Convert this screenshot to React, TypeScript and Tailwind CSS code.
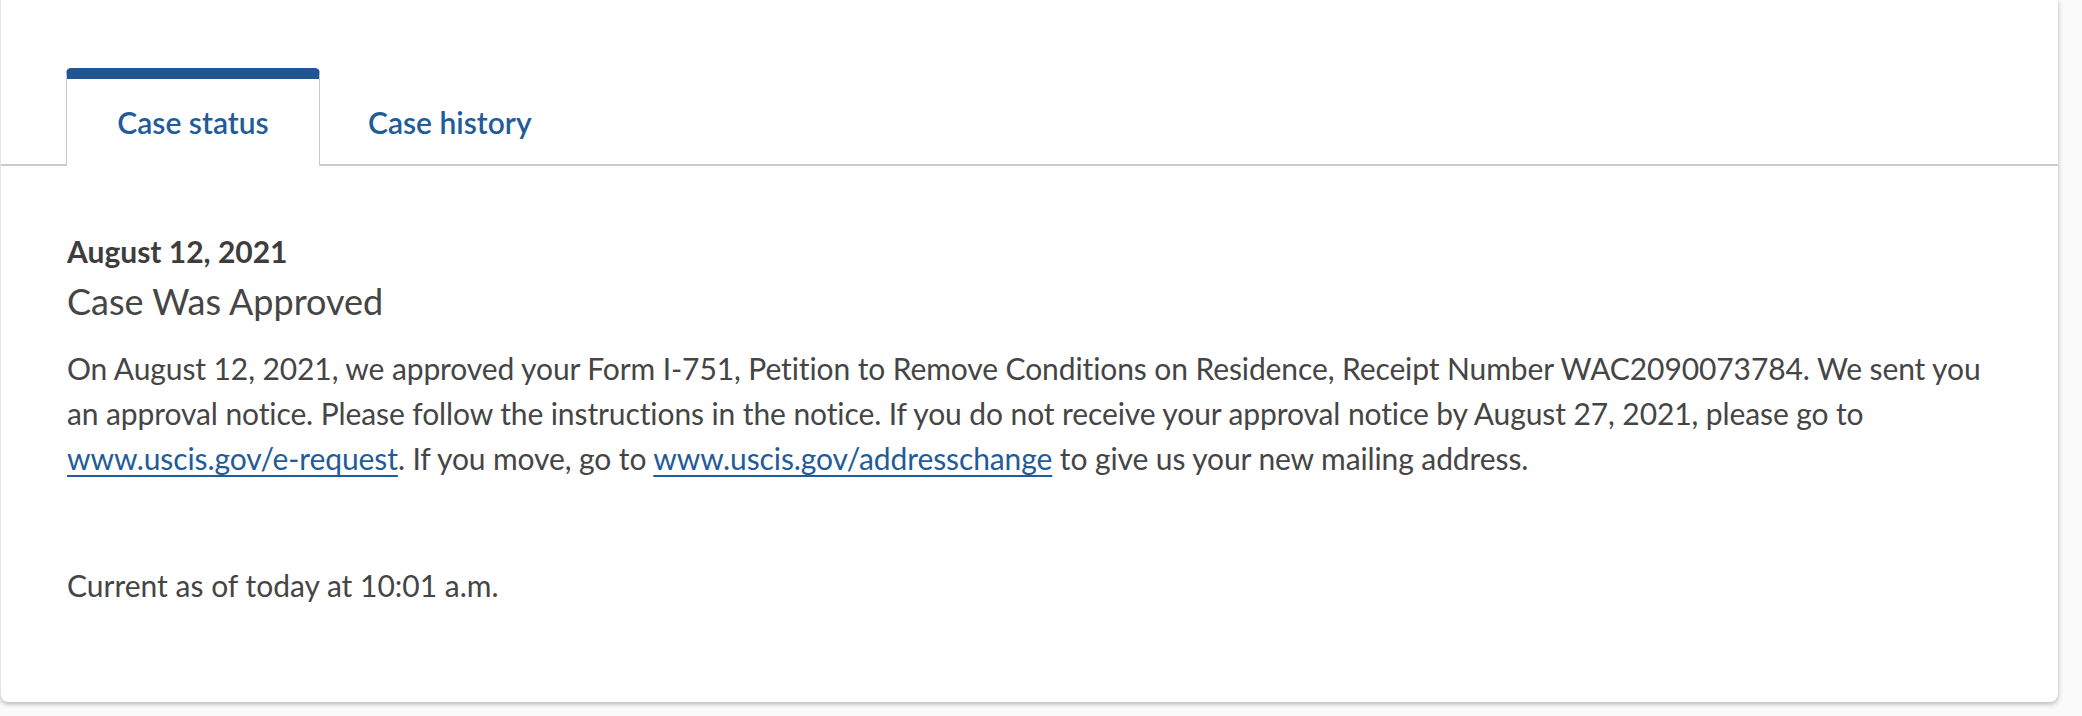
import React from "react";

export default function App() {
  const font = { fontFamily: "Lato, 'Noto Sans', sans-serif" };
  return (
    <div className="w-[2082px] h-[716px] bg-[#fafafa] overflow-hidden" style={font}>
      <div className="w-[2058px] bg-white rounded-b-[8px] shadow-[0_2px_5px_rgba(0,0,0,0.28)] border-l border-[#e4e4e4]">
        <div className="pt-[68px] flex items-end border-b-2 border-[#cbcbcb] pl-[65px]">
          <div className="mb-[-2px] bg-white border-t-[11px] border-t-[#205493] border-x border-x-[#c8c8c8] rounded-t-[5px] w-[254px] pt-[25px] pb-[26px] text-center">
            <span className="text-[30px] leading-[36px] font-semibold text-[#1f5c99]">Case status</span>
          </div>
          <div className="pb-[24px] px-[48px]">
            <span className="text-[30px] leading-[36px] font-semibold text-[#1f5c99]">Case history</span>
          </div>
        </div>
        <div className="pl-[66px] pr-[55px] pt-[67px] pb-[94px] text-[#454545]">
          <div className="text-[30px] leading-[36px] font-bold text-[#3d3d3d]">August 12, 2021</div>
          <div className="mt-[10px] text-[36px] leading-[44px] text-[#454545]">Case Was Approved</div>
          <p className="mt-[23px] text-[30px] leading-[45px] tracking-[-0.1px]">
            On August 12, 2021, we approved your Form I-751, Petition to Remove Conditions on Residence, Receipt Number WAC2090073784. We sent you an approval notice. Please follow the instructions in the notice. If you do not receive your approval notice by August 27, 2021, please go to{" "}
            <a href="#" className="whitespace-nowrap text-[#1f5c99] underline underline-offset-[5px] decoration-2">www.uscis.gov/e-request</a>. If you move, go to{" "}
            <a href="#" className="whitespace-nowrap text-[#1f5c99] underline underline-offset-[5px] decoration-2">www.uscis.gov/addresschange</a> to give us your new mailing address.
          </p>
          <p className="mt-[82px] text-[30px] leading-[45px]">Current as of today at 10:01 a.m.</p>
        </div>
      </div>
    </div>
  );
}
